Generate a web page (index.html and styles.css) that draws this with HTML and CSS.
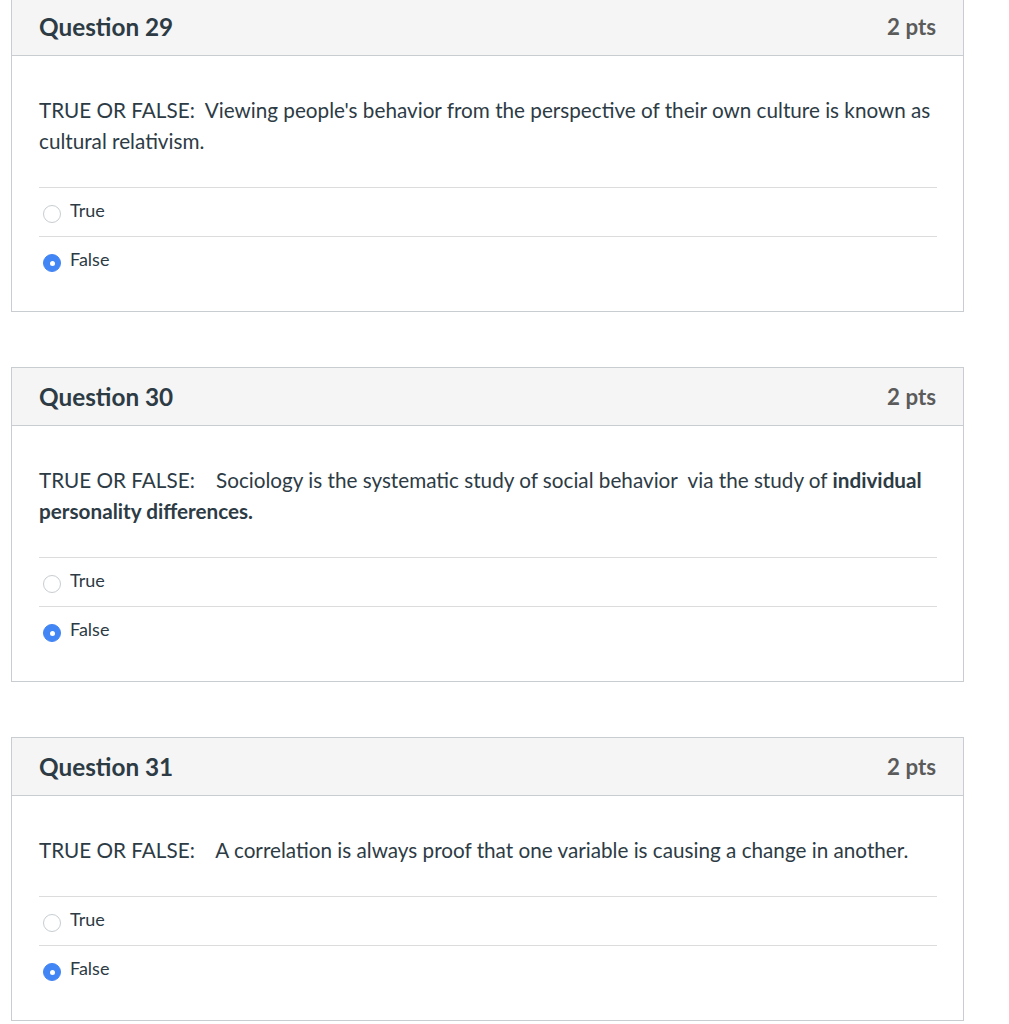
FILE: index.html
```html
<!DOCTYPE html>
<html lang="en">
<head>
<meta charset="utf-8">
<title>Quiz</title>
<link rel="stylesheet" href="styles.css">
</head>
<body>
<main class="quiz">
  <section class="question">
    <header class="q-header">
      <h2 class="q-title">Question 29</h2>
      <span class="q-points">2 pts</span>
    </header>
    <div class="q-body">
      <p class="q-text">TRUE OR FALSE:&nbsp; Viewing people's behavior from the perspective of their own culture is known as cultural relativism.</p>
      <ul class="answers">
        <li class="answer"><span class="radio"></span><span class="label">True</span></li>
        <li class="answer"><span class="radio checked"></span><span class="label">False</span></li>
      </ul>
    </div>
  </section>

  <section class="question">
    <header class="q-header">
      <h2 class="q-title">Question 30</h2>
      <span class="q-points">2 pts</span>
    </header>
    <div class="q-body">
      <p class="q-text">TRUE OR FALSE: &nbsp;&nbsp;&nbsp;Sociology is the systematic study of social behavior&nbsp; via the study of <strong>individual personality differences.</strong></p>
      <ul class="answers">
        <li class="answer"><span class="radio"></span><span class="label">True</span></li>
        <li class="answer"><span class="radio checked"></span><span class="label">False</span></li>
      </ul>
    </div>
  </section>

  <section class="question">
    <header class="q-header">
      <h2 class="q-title">Question 31</h2>
      <span class="q-points">2 pts</span>
    </header>
    <div class="q-body">
      <p class="q-text">TRUE OR FALSE: &nbsp;&nbsp;&nbsp;A correlation is always proof that one variable is causing a change in another.</p>
      <ul class="answers">
        <li class="answer"><span class="radio"></span><span class="label">True</span></li>
        <li class="answer"><span class="radio checked"></span><span class="label">False</span></li>
      </ul>
    </div>
  </section>
</main>
</body>
</html>
```
FILE: styles.css
```css
html, body {
  margin: 0;
  padding: 0;
  background: #ffffff;
}

body {
  font-family: Lato, "Open Sans", sans-serif;
  color: #2d3b45;
}

.quiz {
  display: flex;
  flex-direction: column;
  gap: 55px;
  width: 953px;
  margin: -3px 0 0 11px;
}

.question {
  border: 1px solid #c7cdd1;
  background: #fff;
}

.q-header {
  display: flex;
  justify-content: space-between;
  align-items: center;
  height: 57px;
  padding: 0 27px;
  background: #f5f5f5;
  border-bottom: 1px solid #c7cdd1;
}

.q-title {
  margin: 0;
  font-size: 24.3px;
  font-weight: 700;
  color: #2d3b45;
}

.q-points {
  font-size: 22.3px;
  font-weight: 700;
  color: #5b5b5b;
}

.q-body {
  padding: 39px 26px 26px 27px;
}

.q-text {
  margin: 0 0 30px;
  font-size: 20.7px;
  line-height: 31px;
  color: #2d3b45;
}

.q-text strong {
  font-weight: 700;
}

.answers {
  list-style: none;
  margin: 0;
  padding: 0;
}

.answer {
  display: flex;
  align-items: center;
  height: 48px;
  border-top: 1px solid #dcdcdc;
  padding-left: 4px;
}

.radio {
  width: 16px;
  height: 16px;
  border: 1px solid #c7cdd1;
  border-radius: 50%;
  background: #fff;
  margin: 4px 9px 0 0;
  box-sizing: content-box;
  display: flex;
  align-items: center;
  justify-content: center;
}

.radio.checked {
  background: #4285f4;
  border-color: #4285f4;
}

.radio.checked::after {
  content: "";
  width: 5px;
  height: 5px;
  border-radius: 50%;
  background: #fff;
}

.label {
  font-size: 18px;
  color: #2d3b45;
  margin-bottom: 4px;
}
```
